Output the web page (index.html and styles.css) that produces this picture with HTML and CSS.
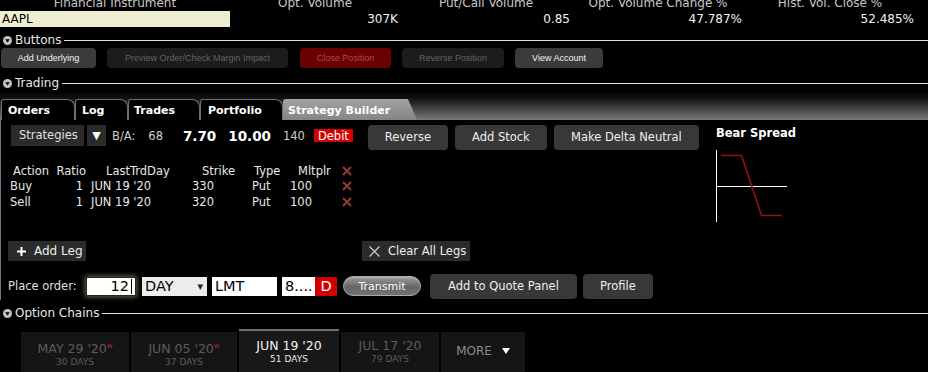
FILE: index.html
```html
<!DOCTYPE html>
<html lang="en">
<head>
    <meta charset="UTF-8">
    <meta name="viewport" content="width=device-width, initial-scale=1.0">
    <title>Strategy Builder</title>
    <link rel="stylesheet" href="styles.css">
</head>
<body>
    <!-- Ligne de cotation -->
    <div class="quote-row quote-labels">
        <div class="cell">Financial Instrument</div>
        <div class="cell">Opt. Volume</div>
        <div class="cell">Put/Call Volume</div>
        <div class="cell">Opt. Volume Change %</div>
        <div class="cell">Hist. Vol. Close %</div>
    </div>
    <div class="quote-row quote-values">
        <div class="cell"><div class="symbol">AAPL</div></div>
        <div class="cell">307K</div>
        <div class="cell">0.85</div>
        <div class="cell">47.787%</div>
        <div class="cell">52.485%</div>
    </div>

    <div class="section">
        <svg class="toggle" width="9" height="9" viewBox="0 0 9 9"><circle cx="4.5" cy="4.5" r="4.5" fill="#c2c2c2"/><path d="M2.2 3.2h4.6L4.5 6.4z" fill="#000"/></svg>
        <span class="section-title">Buttons</span>
        <span class="rule"></span>
    </div>
    <div class="button-bar">
        <div class="bar-btn bar-btn-on w-underlying">Add Underlying</div>
        <div class="bar-btn bar-btn-off w-preview">Preview Order/Check Margin Impact</div>
        <div class="bar-btn bar-btn-red w-close">Close Position</div>
        <div class="bar-btn bar-btn-off w-reverse">Reverse Position</div>
        <div class="bar-btn bar-btn-on w-account">View Account</div>
    </div>

    <div class="section section-trading">
        <svg class="toggle" width="9" height="9" viewBox="0 0 9 9"><circle cx="4.5" cy="4.5" r="4.5" fill="#c2c2c2"/><path d="M2.2 3.2h4.6L4.5 6.4z" fill="#000"/></svg>
        <span class="section-title">Trading</span>
        <span class="rule"></span>
    </div>

    <div class="tab-strip">
        <div class="tab w-orders">Orders</div>
        <div class="tab w-log">Log</div>
        <div class="tab w-trades">Trades</div>
        <div class="tab w-portfolio">Portfolio</div>
        <div class="tab tab-active">Strategy Builder</div>
    </div>

    <div class="panel">
        <div class="builder">
            <div class="builder-main">
                <div class="strategy-row">
                    <div class="strategies">Strategies</div>
                    <div class="strategies-arrow">▼</div>
                    <span class="ba-label">B/A:</span>
                    <span class="ba-size">68</span>
                    <span class="ba-price">7.70</span>
                    <span class="ba-price ask">10.00</span>
                    <span class="ba-size ask-size">140</span>
                    <span class="debit">Debit</span>
                    <div class="gray-btn w-rev">Reverse</div>
                    <div class="gray-btn w-stock">Add Stock</div>
                    <div class="gray-btn w-delta">Make Delta Neutral</div>
                </div>

                <div class="legs">
                    <div class="leg-row leg-head">
                        <span>Action</span><span>Ratio</span><span>LastTrdDay</span><span>Strike</span><span>Type</span><span>Mltplr</span>
                        <span><svg class="del" width="10" height="10" viewBox="0 0 10 10"><path d="M1 1L9 9M9 1L1 9" stroke="#8c3a32" stroke-width="2.2"/></svg></span>
                    </div>
                    <div class="leg-row">
                        <span>Buy</span><span>1</span><span>JUN 19 '20</span><span>330</span><span>Put</span><span>100</span>
                        <span><svg class="del" width="10" height="10" viewBox="0 0 10 10"><path d="M1 1L9 9M9 1L1 9" stroke="#8c3a32" stroke-width="2.2"/></svg></span>
                    </div>
                    <div class="leg-row">
                        <span>Sell</span><span>1</span><span>JUN 19 '20</span><span>320</span><span>Put</span><span>100</span>
                        <span><svg class="del" width="10" height="10" viewBox="0 0 10 10"><path d="M1 1L9 9M9 1L1 9" stroke="#8c3a32" stroke-width="2.2"/></svg></span>
                    </div>
                </div>

                <div class="leg-actions">
                    <div class="flat-btn add-leg">
                        <svg width="9" height="9" viewBox="0 0 9 9"><path d="M4.5 0V9M0 4.5H9" stroke="#fff" stroke-width="2"/></svg>
                        Add Leg
                    </div>
                    <div class="flat-btn clear-legs">
                        <svg width="11" height="11" viewBox="0 0 11 11"><path d="M0.5 0.5L10.5 10.5M10.5 0.5L0.5 10.5" stroke="#cfcfcf" stroke-width="1.2"/></svg>
                        Clear All Legs
                    </div>
                </div>
            </div>

            <div class="payoff">
                <div class="payoff-title">Bear Spread</div>
                <svg class="payoff-chart" width="72" height="72" viewBox="0 0 72 72">
                    <path d="M0.5 0V72" stroke="#fff" stroke-width="1"/>
                    <path d="M0 36.5H71" stroke="#fff" stroke-width="1"/>
                    <path d="M5 5.5H25.5L45.5 65.5H66" fill="none" stroke="#8e1212" stroke-width="1.6"/>
                </svg>
            </div>
        </div>

        <div class="order-row">
            <span class="order-label">Place order:</span>
            <div class="field qty">12<span class="caret"></span></div>
            <div class="field tif">DAY<span class="tif-arrow">▾</span></div>
            <div class="field type">LMT</div>
            <div class="field price">8....</div><div class="price-flag">D</div>
            <div class="transmit">Transmit</div>
            <div class="gray-btn w-quote">Add to Quote Panel</div>
            <div class="gray-btn w-profile">Profile</div>
        </div>
    </div>

    <div class="section section-chains">
        <svg class="toggle" width="9" height="9" viewBox="0 0 9 9"><circle cx="4.5" cy="4.5" r="4.5" fill="#c2c2c2"/><path d="M2.2 3.2h4.6L4.5 6.4z" fill="#000"/></svg>
        <span class="section-title">Option Chains</span>
        <span class="rule"></span>
    </div>

    <div class="expiries">
        <div class="expiry w-e1">
            <div class="exp-date">MAY 29 '20<span class="weekly">w</span></div>
            <div class="exp-days">30 DAYS</div>
        </div>
        <div class="expiry w-e2">
            <div class="exp-date">JUN 05 '20<span class="weekly">w</span></div>
            <div class="exp-days">37 DAYS</div>
        </div>
        <div class="expiry expiry-active w-e3">
            <div class="exp-date">JUN 19 '20</div>
            <div class="exp-days">51 DAYS</div>
        </div>
        <div class="expiry w-e4">
            <div class="exp-date">JUL 17 '20</div>
            <div class="exp-days">79 DAYS</div>
        </div>
        <div class="expiry expiry-more w-e5">
            MORE
            <svg width="8" height="6" viewBox="0 0 8 6"><path d="M0 0H8L4 6z" fill="#fff"/></svg>
        </div>
    </div>
</body>
</html>
```

FILE: styles.css
```css
body {
    margin: 0;
    width: 928px;
    height: 372px;
    overflow: hidden;
    background: #000;
    color: #e6e6e6;
    font-family: "DejaVu Sans", sans-serif;
    font-size: 11.5px;
}

/* Ligne de cotation */
.quote-row {
    display: grid;
    grid-template-columns: 230px 170px 172px 172px 172px;
}
.quote-labels {
    margin-top: -2px;
    height: 11px;
    line-height: 11px;
    font-size: 12px;
    color: #c8c8c8;
    text-align: center;
}
.quote-values {
    margin-top: 2px;
    height: 16px;
    line-height: 17px;
    font-size: 12px;
    color: #f2f2f2;
    text-align: right;
}
.quote-values .cell {
    padding-right: 2px;
}
.quote-values .cell:first-child {
    padding-right: 0;
}
.symbol {
    height: 16px;
    background: #efeed2;
    color: #000;
    text-align: left;
    padding-left: 2px;
}

/* En-têtes de section */
.section {
    display: flex;
    align-items: center;
    height: 15px;
    margin-top: 6px;
    padding-left: 3px;
}
.section-trading {
    margin-top: 8px;
}
.section-chains {
    margin-top: 6px;
}
.toggle {
    flex: none;
}
.section-title {
    margin-left: 3px;
    font-size: 12px;
    line-height: 15px;
    color: #e8e8e8;
}
.rule {
    flex: 1;
    height: 1px;
    margin-left: 3px;
    background: #e0e0e0;
}

/* Barre de boutons */
.button-bar {
    display: flex;
    height: 20px;
    padding-left: 1px;
}
.bar-btn {
    height: 20px;
    line-height: 20px;
    margin-right: 11px;
    border-radius: 4px;
    text-align: center;
    font-family: "Liberation Sans", Arial, sans-serif;
    font-size: 9px;
    white-space: nowrap;
}
.bar-btn-on {
    background: #3b3b3b;
    color: #f4f4f4;
}
.bar-btn-off {
    background: #1c1c1c;
    color: #626262;
}
.bar-btn-red {
    background: #6b0000;
    color: #b84a4a;
}
.w-underlying { width: 95px; }
.w-preview { width: 181px; margin-right: 12px; }
.w-close { width: 91px; }
.w-reverse { width: 102px; }
.w-account { width: 88px; }

/* Onglets */
.tab-strip {
    display: flex;
    align-items: flex-end;
    height: 29px;
    padding-left: 1px;
    background: linear-gradient(to bottom, #000 0%, #111 25%, #7a7a7a 100%);
}
.tab {
    box-sizing: border-box;
    height: 21px;
    padding: 3px 0 0 6px;
    background: #000;
    border: 1px solid #6f6f6f;
    border-bottom: none;
    border-radius: 3px 8px 0 0;
    color: #fff;
    font-weight: bold;
    font-size: 11px;
    line-height: 15px;
}
.w-orders { width: 74px; }
.w-log { width: 53px; }
.w-trades { width: 72px; padding-left: 5px; }
.w-portfolio { width: 83px; padding-left: 7px; }
.tab-active {
    width: 134px;
    border: none;
    padding: 4px 0 0 5px;
    background: linear-gradient(to bottom, #a2a2a2, #858585);
    clip-path: polygon(0 0, calc(100% - 9px) 0, 100% 100%, 0 100%);
    border-radius: 3px 0 0 0;
}

/* Panneau Strategy Builder */
.panel {
    border-left: 1px solid #777;
    padding: 5px 0 1px 10px;
}
.builder {
    display: flex;
}
.builder-main {
    width: 705px;
}
.strategy-row {
    display: flex;
    align-items: flex-start;
    height: 25px;
}
.strategies {
    width: 73px;
    height: 21px;
    line-height: 21px;
    padding-left: 8px;
    box-sizing: border-box;
    background: #2b2b2b;
    color: #e0e0e0;
}
.strategies-arrow {
    width: 19px;
    height: 21px;
    line-height: 21px;
    margin-left: 3px;
    background: #2b2b2b;
    color: #fff;
    text-align: center;
    font-size: 11px;
}
.ba-label,
.ba-size,
.ba-price {
    line-height: 22px;
    color: #d0d0d0;
}
.ba-label { margin-left: 6px; }
.ba-size { margin-left: 13px; }
.ba-price {
    margin-left: 20px;
    font-size: 13.5px;
    font-weight: bold;
    color: #fff;
}
.ask { margin-left: 12px; }
.ask-size { margin-left: 12px; }
.debit {
    margin: 4px 0 0 9px;
    height: 13px;
    line-height: 14px;
    padding: 0 4px;
    background: #d40000;
    color: #fff;
}
.gray-btn {
    height: 25px;
    line-height: 25px;
    margin-left: 7px;
    border-radius: 4px;
    background: #383838;
    color: #eee;
    text-align: center;
}
.w-rev { width: 80px; margin-left: 15px; }
.w-stock { width: 92px; }
.w-delta { width: 145px; }

/* Tableau des jambes */
.legs {
    margin: 13px 0 0 -1px;
    color: #e8e8e8;
}
.leg-row {
    display: grid;
    grid-template-columns: 42px 36px 98px 60px 44px 50px 16px;
    height: 16px;
    line-height: 16px;
    white-space: nowrap;
}
.leg-head {
    height: 15px;
}
.leg-row span:nth-child(2) { text-align: right; padding-right: 5px; }
.leg-row span:nth-child(3) { padding-left: 3px; }
.leg-row span:nth-child(4) { padding-left: 6px; }
.leg-row span:nth-child(5) { padding-left: 6px; }
.leg-row span:nth-child(7) { padding-left: 2px; }
.leg-head span:nth-child(1) { padding-left: 3px; }
.leg-head span:nth-child(2) { padding-right: 2px; }
.leg-head span:nth-child(3) { padding-left: 18px; }
.leg-head span:nth-child(4) { padding-left: 16px; }
.leg-head span:nth-child(5) { padding-left: 8px; }
.leg-head span:nth-child(6) { padding-left: 8px; }
.del {
    vertical-align: -1px;
}

.leg-actions {
    display: flex;
    margin: 31px 0 0 -3px;
}
.flat-btn {
    display: flex;
    align-items: center;
    height: 20px;
    background: #2b2b2b;
    color: #eee;
    font-size: 12px;
    box-sizing: border-box;
}
.add-leg {
    width: 78px;
    padding-left: 9px;
    gap: 8px;
}
.clear-legs {
    width: 108px;
    margin-left: 276px;
    padding-left: 7px;
    gap: 8px;
    font-size: 11.5px;
}

/* Graphique */
.payoff {
    padding-top: 1px;
}
.payoff-title {
    line-height: 14px;
    font-weight: bold;
    color: #fff;
}
.payoff-chart {
    display: block;
    margin-top: 10px;
}

/* Ligne d'ordre */
.order-row {
    display: flex;
    align-items: center;
    height: 26px;
    margin: 12px 0 0 -3px;
}
.order-label {
    width: 78px;
    color: #e0e0e0;
}
.field {
    box-sizing: border-box;
    height: 19px;
    line-height: 19px;
    background: #fff;
    color: #000;
    font-size: 14.5px;
    padding-left: 3px;
}
.qty {
    width: 50px;
    border: 1px solid #222;
    line-height: 17px;
    text-align: right;
    padding-right: 3px;
    box-shadow: 0 0 5px 1px rgba(235, 225, 175, 0.45);
}
.caret {
    display: inline-block;
    width: 1px;
    height: 15px;
    margin-left: 2px;
    background: #000;
    vertical-align: -3px;
}
.tif {
    display: flex;
    justify-content: space-between;
    width: 65px;
    margin-left: 6px;
    background: #ececec;
    padding-right: 4px;
}
.tif-arrow {
    font-size: 11px;
    color: #222;
}
.type {
    width: 65px;
    margin-left: 5px;
}
.price {
    width: 33px;
    margin-left: 5px;
}
.price-flag {
    width: 22px;
    height: 19px;
    line-height: 19px;
    background: #d00000;
    color: #fff;
    text-align: center;
    font-size: 14.5px;
}
.transmit {
    box-sizing: border-box;
    width: 78px;
    height: 20px;
    line-height: 20px;
    margin-left: 6px;
    border: 1px solid #a8a8a8;
    border-radius: 10px;
    background: linear-gradient(to bottom, #9c9c9c, #666 55%, #727272);
    box-shadow: inset 0 1px 0 rgba(255, 255, 255, 0.25);
    color: #fff;
    text-align: center;
    font-size: 11px;
}
.w-quote { width: 147px; margin-left: 9px; }
.w-profile { width: 70px; margin-left: 6px; }

/* Chaînes d'options */
.expiries {
    display: flex;
    align-items: flex-end;
    gap: 2px;
    height: 47px;
    margin-top: 8px;
    padding-left: 21px;
}
.expiry {
    box-sizing: border-box;
    height: 44px;
    padding-top: 7px;
    background: #151515;
    text-align: center;
    color: #5c5c5c;
}
.exp-date {
    font-size: 12.5px;
    line-height: 14px;
}
.exp-days {
    font-size: 9px;
    line-height: 11px;
    margin-top: 1px;
}
.weekly {
    font-size: 7px;
    color: #b83030;
    vertical-align: 5px;
}
.expiry-active {
    height: 47px;
    padding-top: 8px;
    border-top: 2px solid #6e6e6e;
    background: #181818;
    color: #f2f2f2;
}
.expiry-active .exp-days {
    color: #e8e8e8;
}
.expiry-more {
    padding-top: 12px;
    font-size: 12px;
    line-height: 14px;
    color: #8a8a8a;
}
.expiry-more svg {
    margin-left: 6px;
    vertical-align: 1px;
}
.w-e1 { width: 108px; }
.w-e2 { width: 106px; }
.w-e3 { width: 100px; }
.w-e4 { width: 98px; }
.w-e5 { width: 84px; }
```
